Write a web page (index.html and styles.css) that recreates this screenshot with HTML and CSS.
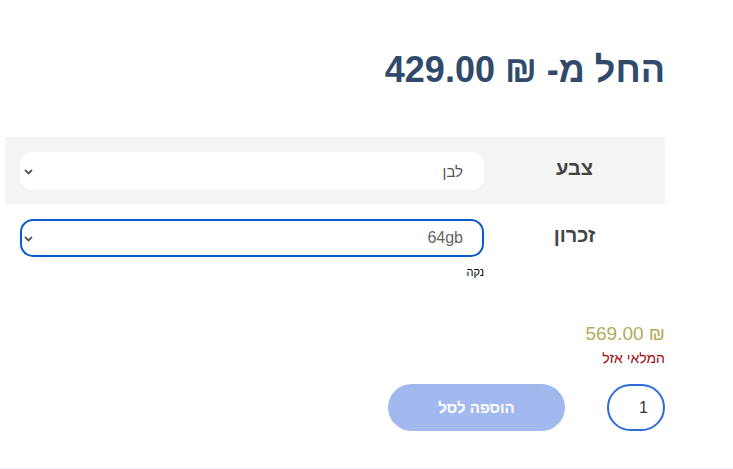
FILE: index.html
```html
<!DOCTYPE html>
<html lang="he" dir="rtl">
    <head>
        <meta charset="utf-8">
        <title>מוצר</title>
        <link rel="stylesheet" href="styles.css">
    </head>
    <body>
        <div class="product">
            <h2 class="price-from">החל מ- ₪ 429.00</h2>

            <div class="variations">
                <div class="var-row shaded">
                    <div class="var-label">צבע</div>
                    <div class="var-value">
                        <div class="select-box">
                            <span class="select-text">לבן</span>
                            <svg class="chevron" width="9" height="6" viewBox="0 0 9 6"><path d="M1 1l3.5 3.5L8 1" fill="none" stroke="#555" stroke-width="1.8"/></svg>
                        </div>
                    </div>
                </div>
                <div class="var-row">
                    <div class="var-label">זכרון</div>
                    <div class="var-value">
                        <div class="select-box focused">
                            <span class="select-text num">64gb</span>
                            <svg class="chevron" width="9" height="6" viewBox="0 0 9 6"><path d="M1 1l3.5 3.5L8 1" fill="none" stroke="#555" stroke-width="1.8"/></svg>
                        </div>
                        <a class="reset">נקה</a>
                    </div>
                </div>
            </div>

            <div class="single-variation">
                <div class="var-price">₪ 569.00</div>
                <div class="stock">המלאי אזל</div>
            </div>

            <div class="cart">
                <div class="qty">1</div>
                <button class="add-btn">הוספה לסל</button>
            </div>
        </div>
        <div class="divider"></div>
    </body>
</html>
```

FILE: styles.css
```css
body{
    margin: 0;
    font-family: "Liberation Sans", "DejaVu Sans", sans-serif;
    background: #fff;
}

.product{
    width: 660px;
    margin-right: 68px;
    padding-top: 48px;
}

.price-from{
    margin: 0 0 45px;
    font-size: 36px;
    line-height: 44px;
    font-weight: bold;
    color: #2f4a6b;
}

.variations{
    display: flex;
    flex-direction: column;
}

.var-row{
    display: flex;
    padding: 15px 0 14px;
}

.var-row.shaded{
    background: #f4f4f4;
}

.var-label{
    width: 181px;
    text-align: center;
    font-size: 20px;
    font-weight: bold;
    color: #444;
    padding-top: 5px;
}

.var-value{
    width: 464px;
}

.select-box{
    height: 38px;
    background: #fff;
    border-radius: 13px;
    display: flex;
    align-items: center;
    justify-content: space-between;
    padding: 0 21px 0 4px;
    box-sizing: border-box;
}

.select-box.focused{
    border: 2px solid #0a5cc8;
    height: 38px;
    padding-right: 19px;
    padding-left: 2px;
}

.select-text{
    font-size: 15px;
    color: #555;
}

.select-text.num{
    font-size: 16px;
    color: #666;
}

.chevron{
    display: block;
    margin-top: 1px;
}

.reset{
    display: block;
    font-size: 11px;
    color: #000;
    margin-top: 9px;
    margin-bottom: 14px;
}

.single-variation{
    margin-top: 17px;
}

.var-price{
    font-size: 19px;
    color: #b3aa5a;
    line-height: 22px;
}

.stock{
    font-size: 14px;
    color: #a20a0a;
    margin-top: 5px;
}

.cart{
    display: flex;
    gap: 42px;
    margin-top: 18px;
}

.qty{
    width: 58px;
    height: 47px;
    box-sizing: border-box;
    border: 2px solid #2d6bd8;
    border-radius: 24px;
    font-size: 16px;
    color: #333;
    padding-right: 15px;
    line-height: 43px;
}

.add-btn{
    width: 177px;
    height: 47px;
    border: none;
    border-radius: 24px;
    background: #a1b9ee;
    color: #fff;
    font-family: inherit;
    font-size: 15px;
    font-weight: bold;
}

.divider{
    margin-top: 37px;
    height: 2px;
    background: #eef3f9;
}
```
